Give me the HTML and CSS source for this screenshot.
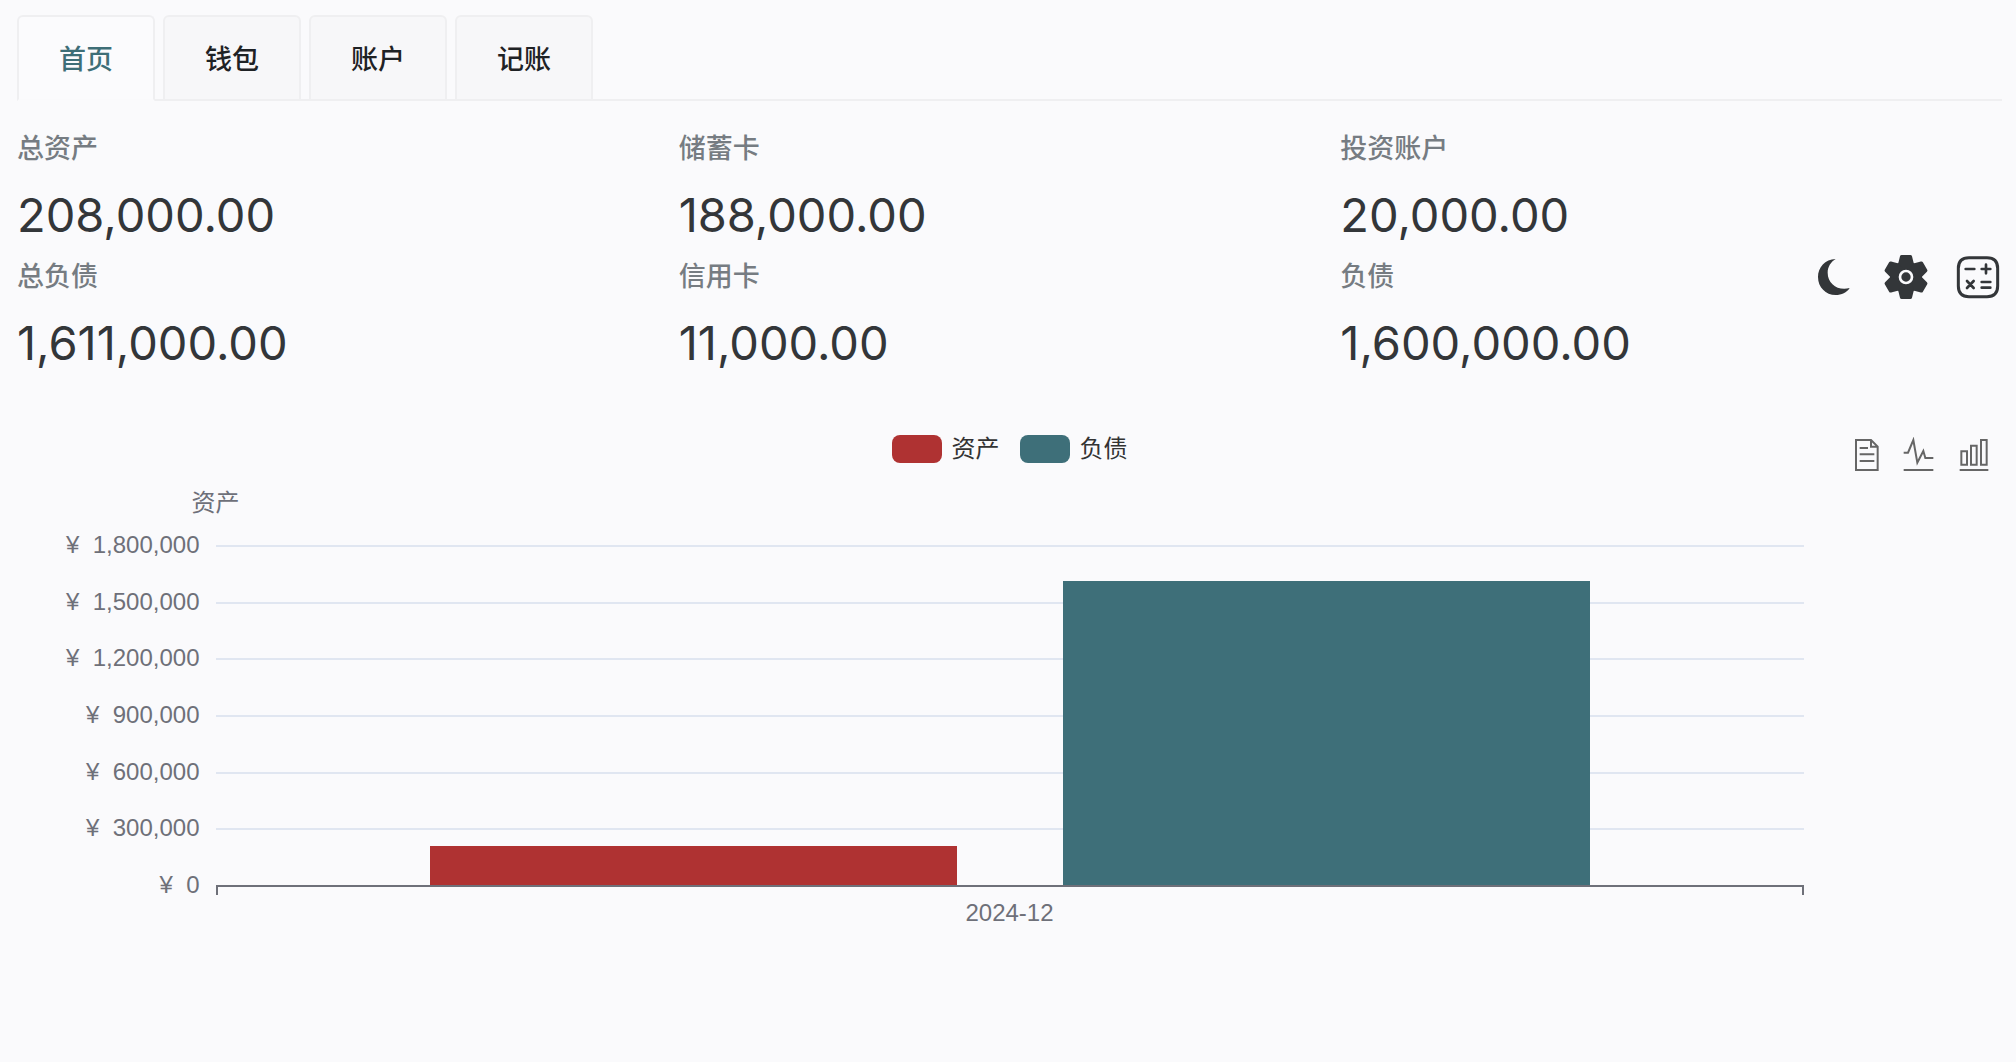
FILE: index.html
```html
<!DOCTYPE html>
<html lang="zh-CN">
<head>
<meta charset="utf-8">
<meta name="viewport" content="width=device-width, initial-scale=1">
<title>首页</title>
<link rel="stylesheet" href="styles.css">
</head>
<body>
<nav class="tabs" role="tablist">
  <button class="tab tab-active" type="button" role="tab" aria-selected="true">首页</button>
  <button class="tab" type="button" role="tab" aria-selected="false">钱包</button>
  <button class="tab" type="button" role="tab" aria-selected="false">账户</button>
  <button class="tab" type="button" role="tab" aria-selected="false">记账</button>
</nav>

<main>
  <section class="stats">
    <div class="stat"><div class="stat-head">总资产</div><div class="stat-value">208,000.00</div></div>
    <div class="stat"><div class="stat-head">储蓄卡</div><div class="stat-value">188,000.00</div></div>
    <div class="stat"><div class="stat-head">投资账户</div><div class="stat-value">20,000.00</div></div>
    <div class="stat"><div class="stat-head">总负债</div><div class="stat-value">1,611,000.00</div></div>
    <div class="stat"><div class="stat-head">信用卡</div><div class="stat-value">11,000.00</div></div>
    <div class="stat">
      <div class="stat-head">
        <span>负债</span>
        <div class="actions">
          <button class="icon-button" type="button" aria-label="深色模式">
            <svg viewBox="69 75 132 132" fill="currentColor"><path d="M140 87C108 88 87 112 87 141C87 172 110 195 140 195C158 195 173 188 182 174C148 184 116 162 116 128C116 111 125 96 140 87Z"/></svg>
          </button>
          <button class="icon-button" type="button" aria-label="设置">
            <svg viewBox="285 75 132 132" fill="currentColor">
              <defs><path id="tooth" d="M328 99L333 79Q334 75 338 75H364Q368 75 369 79L374 99L366 141H336Z"/></defs>
              <circle cx="351" cy="141" r="48"/>
              <use href="#tooth"/>
              <use href="#tooth" transform="rotate(60 351 141)"/>
              <use href="#tooth" transform="rotate(120 351 141)"/>
              <use href="#tooth" transform="rotate(180 351 141)"/>
              <use href="#tooth" transform="rotate(240 351 141)"/>
              <use href="#tooth" transform="rotate(300 351 141)"/>
              <circle class="gear-ring" cx="351" cy="141" r="18"/>
            </svg>
          </button>
          <button class="icon-button" type="button" aria-label="计算器">
            <svg viewBox="501 75 132 132" fill="none" stroke="currentColor" stroke-width="8" stroke-linecap="round">
              <path stroke-width="9" d="M540 83H594Q626 83 626 115V168Q626 200 594 200H540Q508 200 508 168V115Q508 83 540 83Z"/>
              <path d="M530 117H556M578 117H604M591 104V130M534 153L554 174M554 153L534 174M578 156H604M578 173H604"/>
            </svg>
          </button>
        </div>
      </div>
      <div class="stat-value">1,600,000.00</div>
    </div>
  </section>

  <section class="chart">
    <header class="chart-head">
      <ul class="legend">
        <li class="legend-item"><span class="swatch swatch-asset"></span>资产</li>
        <li class="legend-item"><span class="swatch swatch-debt"></span>负债</li>
      </ul>
      <div class="toolbox">
        <button class="tool-button" type="button" aria-label="数据视图">
          <svg viewBox="53 51 108 108" fill="none" stroke="currentColor" stroke-width="6"><path d="M77 60H122L142 80V150H77ZM122 60V80H142M88 84H113M88 103H132M88 123H132"/></svg>
        </button>
        <button class="tool-button" type="button" aria-label="折线图">
          <svg viewBox="215 51 108 108" fill="none" stroke="currentColor" stroke-width="6"><path d="M220 98H233L249 60L261 128L279 93L285 114H309M220 150H309"/></svg>
        </button>
        <button class="tool-button" type="button" aria-label="柱状图">
          <svg viewBox="377 51 108 108" fill="none" stroke="currentColor" stroke-width="6"><path d="M393 94H410V134H393ZM422 77H439V134H422ZM452 60H469V134H452ZM388 150H474"/></svg>
        </button>
      </div>
    </header>
    <div class="axis-name">资产</div>
    <div class="plot">
      <ul class="y-axis">
        <li>¥&nbsp; 1,800,000</li>
        <li>¥&nbsp; 1,500,000</li>
        <li>¥&nbsp; 1,200,000</li>
        <li>¥&nbsp; 900,000</li>
        <li>¥&nbsp; 600,000</li>
        <li>¥&nbsp; 300,000</li>
        <li>¥&nbsp; 0</li>
      </ul>
      <div class="grid-lines">
        <span></span><span></span><span></span><span></span><span></span><span></span><span class="base-line"></span>
      </div>
      <div class="bars">
        <div class="bar bar-asset" style="height:11.556%"></div>
        <div class="bar bar-debt" style="height:89.5%"></div>
      </div>
      <div class="x-ticks"></div>
      <div class="x-label">2024-12</div>
    </div>
  </section>
</main>
</body>
</html>
```
FILE: styles.css
```css
* { box-sizing: border-box; }

body {
  margin: 0;
  padding: 15px 14px 0 17px;
  background: #fafafc;
  color: #333639;
  font-family: Inter, "Noto Sans CJK SC", sans-serif;
  font-size: 27px;
}

ul { list-style: none; margin: 0; padding: 0; }

button {
  font: inherit;
  color: inherit;
  background: none;
  border: 0;
  padding: 0;
  cursor: pointer;
}

/* Tabs */
.tabs {
  display: flex;
  gap: 8px;
  border-bottom: 2px solid #efeff1;
}

.tab {
  height: 86px;
  margin-bottom: -2px;
  padding: 0 40px 2px;
  border: 2px solid #efeff1;
  border-radius: 6px 6px 0 0;
  background: #f7f7f9;
  color: #1f2225;
  font-weight: 500;
}

.tab-active {
  border-bottom-color: #fafafc;
  background: #fbfbfd;
  color: #3e6e77;
}

/* Totals */
.stats {
  display: grid;
  grid-template-columns: repeat(3, 1fr);
  padding-top: 24px;
}

.stat-head {
  display: flex;
  align-items: center;
  justify-content: space-between;
  height: 42px;
  margin-bottom: 8px;
  color: #767c82;
  font-weight: 500;
}

.stat-value {
  padding-top: 2px;
  font-size: 47px;
  line-height: 76px;
}

.actions {
  display: flex;
  gap: 28px;
  padding: 6px 2px 0 0;
  color: #333639;
}

.icon-button svg {
  display: block;
  width: 44px;
  height: 44px;
}

.gear-ring {
  fill: none;
  stroke: #fafafc;
  stroke-width: 8;
}

/* Chart */
.chart {
  margin-top: 48px;
  font-family: "Liberation Sans", "Noto Sans CJK SC", sans-serif;
  font-size: 24px;
  line-height: 24px;
  color: #6e7079;
}

.chart-head {
  display: grid;
  grid-template-columns: 1fr auto 1fr;
  align-items: start;
}

.legend {
  grid-column: 2;
  display: flex;
  gap: 20px;
  color: #333;
}

.legend-item {
  display: flex;
  align-items: center;
  gap: 10px;
  height: 40px;
}

.swatch {
  width: 50px;
  height: 28px;
  border-radius: 8px;
}

.swatch-asset, .bar-asset { background: #af3232; }
.swatch-debt, .bar-debt { background: #3e6f79; }

.toolbox {
  display: flex;
  align-items: center;
  justify-content: flex-end;
  gap: 18px;
  height: 52px;
  padding-right: 10px;
  color: #666;
}

.tool-button svg {
  display: block;
  width: 36px;
  height: 36px;
}

.axis-name {
  width: 20%;
  line-height: 44px;
  text-align: center;
}

.plot {
  display: grid;
  grid-template-columns: 10% 1fr 10%;
  grid-template-rows: 342px 8px auto;
  margin-top: 20px;
}

.y-axis {
  display: flex;
  flex-direction: column;
  justify-content: space-between;
  margin: -12px 0 -10px;
  padding-right: 16px;
  text-align: right;
}

.grid-lines, .bars { grid-area: 1 / 2; }

.grid-lines {
  display: flex;
  flex-direction: column;
  justify-content: space-between;
}

.grid-lines span {
  height: 2px;
  background: #e0e6f1;
}

.grid-lines .base-line { background: #6e7079; }

.bars {
  display: grid;
  grid-template-columns: 214fr 527fr 106fr 527fr 214fr;
  align-items: end;
  padding-bottom: 2px;
}

.bar-asset { grid-column: 2; }
.bar-debt { grid-column: 4; }

.x-ticks {
  grid-area: 2 / 2;
  border: solid #6e7079;
  border-width: 0 2px;
}

.x-label {
  grid-area: 3 / 2;
  line-height: 36px;
  text-align: center;
}
```
